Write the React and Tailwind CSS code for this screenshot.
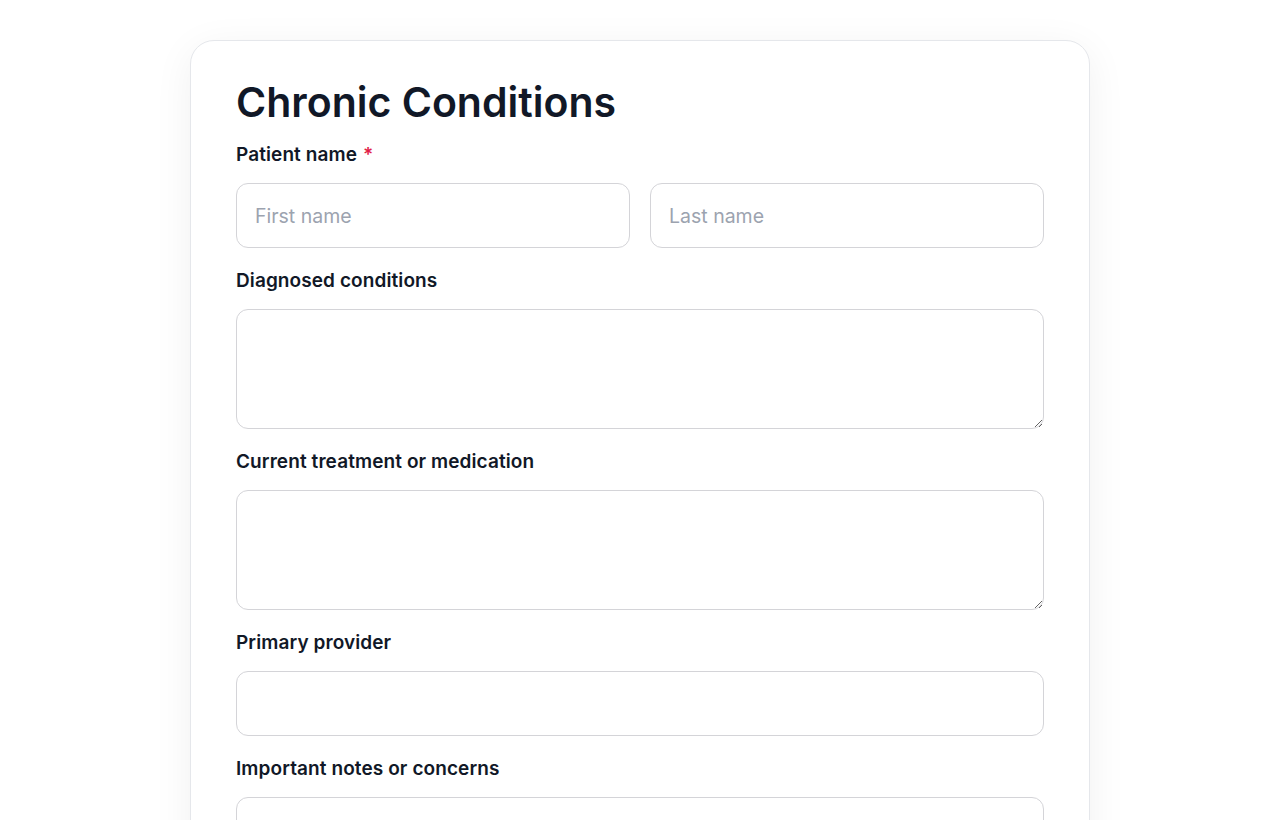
import React from "react";

const Label = ({ children, required }) => (
  <label className="block text-[19px] leading-6 font-semibold tracking-[0.005em] text-[#111827] mb-4">
    {children}
    {required && <span className="text-[#e11d48] ml-1.5">*</span>}
  </label>
);

const inputCls =
  "w-full h-[65px] rounded-xl border border-[#d4d4d8] bg-white px-[18px] text-[19.5px] text-[#111827] placeholder:text-[#9ca3af] outline-none";

const areaCls =
  "block w-full h-[120px] rounded-xl border border-[#d4d4d8] bg-white px-[18px] py-3 text-[19.5px] text-[#111827] outline-none";

export default function App() {
  return (
    <div
      className="min-h-screen bg-white pt-10 pb-10"
      style={{ fontFamily: "Inter, 'Noto Sans', sans-serif" }}
    >
      <div className="mx-auto w-[900px] rounded-3xl border border-[#e5e7eb] bg-white px-[45px] pt-[37px] pb-10 shadow-[0_8px_40px_rgba(0,0,0,0.06)]">
        <h1 className="text-[41px] leading-[48px] font-semibold text-[#111827] mb-[17px]">
          Chronic Conditions
        </h1>

        <div className="flex flex-col gap-[21px]">
          <div>
            <Label required>Patient name</Label>
            <div className="grid grid-cols-2 gap-5">
              <input className={inputCls} placeholder="First name" />
              <input className={inputCls} placeholder="Last name" />
            </div>
          </div>

          <div>
            <Label>Diagnosed conditions</Label>
            <textarea className={areaCls} />
          </div>

          <div>
            <Label>Current treatment or medication</Label>
            <textarea className={areaCls} />
          </div>

          <div>
            <Label>Primary provider</Label>
            <input className={inputCls} />
          </div>

          <div>
            <Label>Important notes or concerns</Label>
            <textarea className={areaCls} />
          </div>
        </div>
      </div>
    </div>
  );
}
